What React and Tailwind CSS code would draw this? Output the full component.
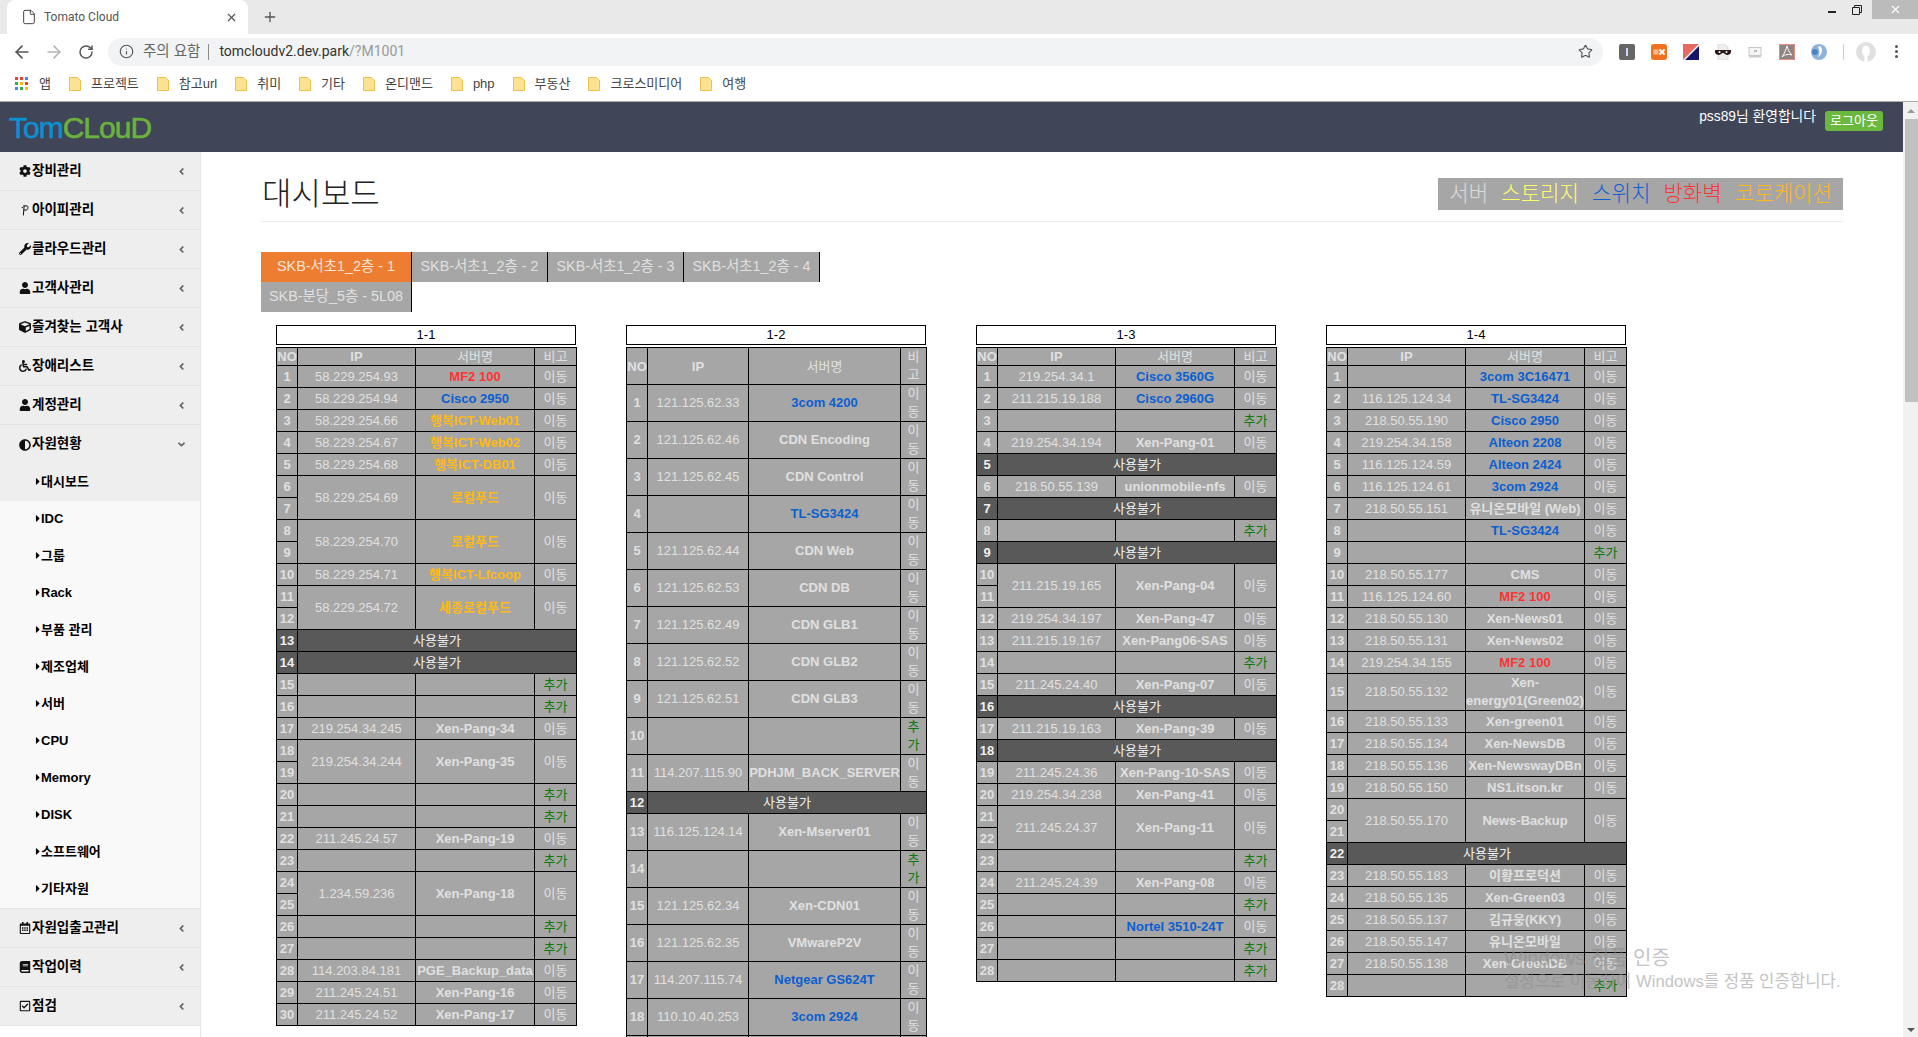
import React from 'react';
import { ArrowLeft, ArrowRight, RotateCw, Info, Star, X, Plus, File } from 'lucide-react';
import { FaCog, FaUser, FaWrench, FaCube, FaWheelchair, FaAdjust, FaRegCalendarAlt, FaBook, FaRegCheckSquare, FaAngleLeft, FaAngleDown, FaCaretRight } from 'react-icons/fa';

const FONT = 'font-["Liberation_Sans","Noto_Sans_CJK_KR",sans-serif]';
const R = 'text-[#ff3333]';
const B = 'text-[#0b5fd0]';
const O = 'text-[#ffb914]';

const n = (no, ip, name, color) => ({ no, ip, name, color });
const add = (no) => ({ no, add: true });
const off = (no) => ({ no, off: true });
const sp = (no, ip, name, color) => ({ no, ip, name, color, span: true });

function expand(rows) {
  const out = [];
  rows.forEach((r) => {
    if (r.span) {
      out.push({ ...r, rowSpan: 2 });
      out.push({ no: r.no + 1, continued: true });
    } else out.push(r);
  });
  return out;
}

const t1 = [
  n(1, '58.229.254.93', 'MF2 100', R), n(2, '58.229.254.94', 'Cisco 2950', B), n(3, '58.229.254.66', '행복ICT-Web01', O),
  n(4, '58.229.254.67', '행복ICT-Web02', O), n(5, '58.229.254.68', '행복ICT-DB01', O), sp(6, '58.229.254.69', '로컬푸드', O),
  sp(8, '58.229.254.70', '로컬푸드', O), n(10, '58.229.254.71', '행복ICT-Lfcoop', O), sp(11, '58.229.254.72', '세종로컬푸드', O),
  off(13), off(14), add(15), add(16), n(17, '219.254.34.245', 'Xen-Pang-34'), sp(18, '219.254.34.244', 'Xen-Pang-35'),
  add(20), add(21), n(22, '211.245.24.57', 'Xen-Pang-19'), add(23), sp(24, '1.234.59.236', 'Xen-Pang-18'), add(26), add(27),
  n(28, '114.203.84.181', 'PGE_Backup_data'), n(29, '211.245.24.51', 'Xen-Pang-16'), n(30, '211.245.24.52', 'Xen-Pang-17'),
];
const t2 = [
  n(1, '121.125.62.33', '3com 4200', B), n(2, '121.125.62.46', 'CDN Encoding'), n(3, '121.125.62.45', 'CDN Control'),
  n(4, '', 'TL-SG3424', B), n(5, '121.125.62.44', 'CDN Web'), n(6, '121.125.62.53', 'CDN DB'), n(7, '121.125.62.49', 'CDN GLB1'),
  n(8, '121.125.62.52', 'CDN GLB2'), n(9, '121.125.62.51', 'CDN GLB3'), add(10), n(11, '114.207.115.90', 'PDHJM_BACK_SERVER'),
  off(12), n(13, '116.125.124.14', 'Xen-Mserver01'), add(14), n(15, '121.125.62.34', 'Xen-CDN01'), n(16, '121.125.62.35', 'VMwareP2V'),
  n(17, '114.207.115.74', 'Netgear GS624T', B), n(18, '110.10.40.253', '3com 2924', B), { no: '', ip: '', name: '', blank: true },
];
const t3 = [
  n(1, '219.254.34.1', 'Cisco 3560G', B), n(2, '211.215.19.188', 'Cisco 2960G', B), add(3), n(4, '219.254.34.194', 'Xen-Pang-01'),
  off(5), n(6, '218.50.55.139', 'unionmobile-nfs'), off(7), add(8), off(9), sp(10, '211.215.19.165', 'Xen-Pang-04'),
  n(12, '219.254.34.197', 'Xen-Pang-47'), n(13, '211.215.19.167', 'Xen-Pang06-SAS'), add(14), n(15, '211.245.24.40', 'Xen-Pang-07'),
  off(16), n(17, '211.215.19.163', 'Xen-Pang-39'), off(18), n(19, '211.245.24.36', 'Xen-Pang-10-SAS'), n(20, '219.254.34.238', 'Xen-Pang-41'),
  sp(21, '211.245.24.37', 'Xen-Pang-11'), add(23), n(24, '211.245.24.39', 'Xen-Pang-08'), add(25), n(26, '', 'Nortel 3510-24T', B), add(27), add(28),
];
const t4 = [
  n(1, '', '3com 3C16471', B), n(2, '116.125.124.34', 'TL-SG3424', B), n(3, '218.50.55.190', 'Cisco 2950', B), n(4, '219.254.34.158', 'Alteon 2208', B),
  n(5, '116.125.124.59', 'Alteon 2424', B), n(6, '116.125.124.61', '3com 2924', B), n(7, '218.50.55.151', '유니온모바일 (Web)'), n(8, '', 'TL-SG3424', B),
  add(9), n(10, '218.50.55.177', 'CMS'), n(11, '116.125.124.60', 'MF2 100', R), n(12, '218.50.55.130', 'Xen-News01'), n(13, '218.50.55.131', 'Xen-News02'),
  n(14, '219.254.34.155', 'MF2 100', R), n(15, '218.50.55.132', 'Xen-energy01(Green02)'), n(16, '218.50.55.133', 'Xen-green01'), n(17, '218.50.55.134', 'Xen-NewsDB'),
  n(18, '218.50.55.136', 'Xen-NewswayDBn'), n(19, '218.50.55.150', 'NS1.itson.kr'), sp(20, '218.50.55.170', 'News-Backup'), off(22),
  n(23, '218.50.55.183', '이황프로덕션'), n(24, '218.50.55.135', 'Xen-Green03'), n(25, '218.50.55.137', '김규웅(KKY)'), n(26, '218.50.55.147', '유니온모바일'),
  n(27, '218.50.55.138', 'Xen-GreenDB'), add(28),
];

const cell = 'border border-black p-0 text-center align-middle text-[13px] leading-[18px]';
const head = 'border border-black p-0 text-center align-middle text-[13px] leading-[17px]';

function RackTable({ title, rows, narrow }) {
  const cols = narrow ? ['w-[21px]', 'w-[101px]', 'w-[152px]', 'w-[26px]'] : ['w-[21px]', 'w-[118px]', 'w-[119px]', 'w-[42px]'];
  const wrap = narrow ? 'px-[2px]' : '';
  return (
    <div className="w-[300px] shrink-0">
      <div className="h-[20px] border border-black bg-white text-center text-[13px] leading-[18px] text-black">{title}</div>
      <table className="mt-[2px] w-[300px] table-fixed border-collapse bg-[#a6a6a6] text-[#e0e0e0]">
        <colgroup>
          {cols.map((c, i) => <col key={i} className={c} />)}
        </colgroup>
        <thead>
          <tr>
            <th className={`${head} font-bold`}>NO</th>
            <th className={`${head} font-bold`}>IP</th>
            <th className={`${head} font-normal`}>서버명</th>
            <th className={`${narrow ? cell : head} font-normal ${wrap}`}>비고</th>
          </tr>
        </thead>
        <tbody>
          {expand(rows).map((r, i) => {
            if (r.continued) return <tr key={i}><td className={`${cell} h-[22px] font-bold`}>{r.no}</td></tr>;
            if (r.off) return (
              <tr key={i} className="bg-[#595959] text-[#f0f0f0]">
                <td className={`${cell} h-[22px] font-bold`}>{r.no}</td>
                <td colSpan={3} className={`${cell} h-[22px]`}>사용불가</td>
              </tr>
            );
            return (
              <tr key={i}>
                <td className={`${cell} h-[22px] font-bold`}>{r.no}</td>
                <td rowSpan={r.rowSpan} className={`${cell} h-[22px]`}>{r.ip}</td>
                <td rowSpan={r.rowSpan} className={`${cell} h-[22px] font-bold ${r.color || ''}`}>{r.name}</td>
                <td rowSpan={r.rowSpan} className={`${cell} h-[22px] ${wrap} ${r.add ? 'text-[#0a7a0a]' : ''}`}>{r.blank ? '' : r.add ? '추가' : '이동'}</td>
              </tr>
            );
          })}
        </tbody>
      </table>
    </div>
  );
}

function IpIcon() {
  return (
    <svg viewBox="0 0 12 14" className="h-[13px] w-[10px]" fill="none" stroke="currentColor" strokeWidth="1.2">
      <path d="M4 1.500h4.500c1.500 0 1.500 4.500-1 5H4.500M5 1l-1 12M2 3.500h1.500" />
    </svg>
  );
}

const menuTop = [
  [<FaCog />, '장비관리'], [<IpIcon />, '아이피관리'], [<FaWrench />, '클라우드관리'], [<FaUser />, '고객사관리'],
  [<FaCube />, '즐겨찾는 고객사'], [<FaWheelchair />, '장애리스트'], [<FaUser />, '계정관리'],
];
const menuBottom = [[<FaRegCalendarAlt />, '자원입출고관리'], [<FaBook />, '작업이력'], [<FaRegCheckSquare />, '점검']];
const subs = ['IDC', '그룹', 'Rack', '부품 관리', '제조업체', '서버', 'CPU', 'Memory', 'DISK', '소프트웨어', '기타자원'];

function MenuItem({ icon, label, open, noBorder }) {
  return (
    <div className={`flex h-[39px] items-center pl-[17px] pr-[13px] text-black ${noBorder ? '' : 'border-b border-[#e3e3e3]'}`}>
      <span className="flex w-[15px] items-center justify-center text-[12px] text-[#111]">{icon}</span>
      <span className="text-[13.5px] font-bold">{label}</span>
      <span className="ml-auto text-[11px] text-[#666]">{open ? <FaAngleDown /> : <FaAngleLeft />}</span>
    </div>
  );
}

function SubItem({ label }) {
  return (
    <div className="flex h-[37px] items-center pb-[2px] pl-[35px] text-[13px] font-bold text-black">
      <FaCaretRight className="w-[6px] text-[11px]" />
      <span>{label}</span>
    </div>
  );
}

function Sidebar() {
  return (
    <div className="w-[201px] shrink-0 border-r border-[#e7e7e7] bg-white">
      <div className="bg-[#eeeeee]">
        {menuTop.map(([ic, l]) => <MenuItem key={l} icon={ic} label={l} />)}
        <MenuItem icon={<FaAdjust />} label="자원현황" open noBorder />
        <SubItem label="대시보드" />
      </div>
      <div className="bg-[#f9f9f9]">
        {subs.map((s) => <SubItem key={s} label={s} />)}
      </div>
      <div className="border-t border-[#e3e3e3] bg-[#eeeeee]">
        {menuBottom.map(([ic, l]) => <MenuItem key={l} icon={ic} label={l} />)}
      </div>
    </div>
  );
}

const tabs = [
  ['SKB-서초1_2층 - 1', 'w-[151px] bg-[#ed7d31] text-[#f4e4d8]'],
  ['SKB-서초1_2층 - 2', 'w-[136px] bg-[#a6a6a6] text-[#e0e0e0]'],
  ['SKB-서초1_2층 - 3', 'w-[136px] bg-[#a6a6a6] text-[#e0e0e0]'],
  ['SKB-서초1_2층 - 4', 'w-[136px] bg-[#a6a6a6] text-[#e0e0e0]'],
  ['SKB-분당_5층 - 5L08', 'w-[151px] bg-[#a6a6a6] text-[#e0e0e0]'],
];

function Folder() {
  return (
    <svg viewBox="0 0 12 14" className="h-[14px] w-[12px] shrink-0">
      <path d="M.5.5h8l3 3v10H.5z" fill="#fde293" stroke="#eec14a" />
    </svg>
  );
}

function Exts() {
  return (
    <div className="ml-[16px] flex items-center gap-[16px]">
      <svg viewBox="0 0 16 16" className="h-4 w-4"><rect width="16" height="16" rx="2" fill="#666" /><rect x="7" y="4" width="1" height="8" fill="#cfd8ff" /><rect x="8" y="4" width="1" height="8" fill="#ffc8c8" /></svg>
      <svg viewBox="0 0 16 16" className="h-4 w-4"><rect width="16" height="16" rx="3" fill="#f2711c" /><rect x="2.500" y="5.500" width="5" height="5" fill="#f9b98c" /><path d="M8.500 5.500l5 5M13.500 5.500l-5 5" stroke="#fff" strokeWidth="1.800" /></svg>
      <svg viewBox="0 0 16 16" className="h-4 w-4"><rect width="16" height="16" fill="#e56b62" /><path d="M16 0v16H0z" fill="#fff" /><path d="M16 2v14H2z" fill="#16146b" /></svg>
      <svg viewBox="0 0 16 16" className="h-4 w-4"><path d="M3 0h7l3 3v13H3z" fill="#eee" stroke="#ddd" /><path d="M0 6h16v2c0 2-2 3-4 3-1 0-3-2-4-2s-3 2-4 2c-2 0-4-1-4-3z" fill="#2a1a1a" /><circle cx="4.500" cy="8" r="1" fill="#fff" /><circle cx="11.500" cy="8" r="1" fill="#fff" /></svg>
      <svg viewBox="0 0 16 16" className="h-4 w-4"><rect x="2" y="3.500" width="12" height="8" fill="#f5f5f5" stroke="#c8c8c8" /><rect x="7" y="6" width="3" height="2" fill="#bbb" /><rect x="2" y="12" width="12" height="1.500" fill="#ccc" /></svg>
      <svg viewBox="0 0 16 16" className="h-4 w-4"><rect x=".5" y=".5" width="15" height="15" fill="#8e8482" stroke="#ef8a80" /><path d="M8 2c1 3 2 7 5 9-3-1-7-1-10 2 2-3 4-7 5-11z" fill="none" stroke="#fff" strokeWidth="1" /></svg>
      <svg viewBox="0 0 16 16" className="h-4 w-4"><circle cx="8" cy="8" r="8" fill="#8fb4dc" /><path d="M9 2c3 2 3 8-2 11 2-3 2-7 0-10z" fill="#fff" /><circle cx="4" cy="8" r="3" fill="#4d83c2" /></svg>
      <div className="h-[16px] w-px bg-[#cfcfcf]" />
      <svg viewBox="0 0 20 20" className="ml-[-4px] h-5 w-5"><circle cx="10" cy="10" r="10" fill="#e0e0e0" /><ellipse cx="10" cy="9" rx="4" ry="5.500" fill="#fff" /><rect x="8.500" y="13" width="3" height="7" fill="#fff" /></svg>
    </div>
  );
}

export default function App() {
  const bookmarks = ['프로젝트', '참고url', '취미', '기타', '온디맨드', 'php', '부동산', '크로스미디어', '여행'];
  return (
    <div className={`relative flex h-[1037px] w-[1918px] flex-col overflow-hidden bg-white ${FONT}`}>
      {/* tab strip */}
      <div className="relative flex h-[34px] shrink-0 items-end bg-[#e9e9e9]">
        <div className="ml-[7px] flex h-[34px] w-[241px] items-center rounded-t-[8px] bg-white pl-[14px] pr-[10px]">
          <File size={16} strokeWidth={1.5} className="text-[#444]" />
          <span className="ml-[7px] font-['Roboto',sans-serif] text-[12px] text-[#555]">Tomato Cloud</span>
          <X size={13} strokeWidth={2.2} className="ml-auto text-[#555]" />
        </div>
        <Plus size={16} strokeWidth={2} className="mb-[9px] ml-[14px] text-[#555]" />
        <div className="absolute right-0 top-0 flex h-[19px] items-start">
          <div className="mr-[16px] mt-[11px] h-[2px] w-[8px] bg-[#222]" />
          <svg viewBox="0 0 10 10" className="mr-[10px] mt-[5px] h-[10px] w-[10px]" fill="none" stroke="#222"><path d="M.5 2.500h7v7h-7zM2.500 2.500v-2h7v7h-2" /></svg>
          <div className="flex h-[19px] w-[46px] items-center justify-center bg-[#bbbbbb]"><X size={13} strokeWidth={2} className="text-white" /></div>
        </div>
      </div>
      {/* address row */}
      <div className="flex h-[34px] shrink-0 items-center bg-white pl-[12px] pt-[1px]">
        <ArrowLeft size={20} strokeWidth={2} className="text-[#555]" />
        <ArrowRight size={20} strokeWidth={2} className="ml-[12px] text-[#b5b5b5]" />
        <RotateCw size={16} strokeWidth={2.2} className="ml-[14px] text-[#555]" />
        <div className="ml-[14px] flex h-[28px] w-[1495px] items-center rounded-[14px] bg-[#f1f3f4] pl-[11px] pr-[10px]">
          <Info size={15} strokeWidth={1.8} className="text-[#555]" />
          <span className="ml-[9px] text-[14.500px] text-[#666]">주의 요함</span>
          <span className="ml-[8px] h-[16px] w-px bg-[#888]" />
          <span className="ml-[10px] font-['Roboto',sans-serif] text-[14px] text-[#333]">tomcloudv2.dev.park<span className="text-[#999]">/?M1001</span></span>
          <Star size={15} strokeWidth={1.8} className="ml-auto text-[#555]" />
        </div>
        <Exts />
        <div className="ml-[19px] flex flex-col gap-[2px]">
          <span className="h-[3px] w-[3px] rounded-full bg-[#555]" />
          <span className="h-[3px] w-[3px] rounded-full bg-[#555]" />
          <span className="h-[3px] w-[3px] rounded-full bg-[#555]" />
        </div>
      </div>
      {/* bookmarks */}
      <div className="flex h-[34px] shrink-0 items-center border-b border-[#aaaaaa] bg-white pb-[2px] pl-[15px] text-[13px] text-[#444]">
        <div className="grid h-[13px] w-[13px] grid-cols-3 grid-rows-3 gap-[2px]">
          <i className="bg-[#ea4335]" /><i className="bg-[#ea4335]" /><i className="bg-[#4285f4]" />
          <i className="bg-[#34a853]" /><i className="bg-[#fbbc05]" /><i className="bg-[#ea4335]" />
          <i className="bg-[#4285f4]" /><i className="bg-[#34a853]" /><i className="bg-[#fbbc05]" />
        </div>
        <span className="ml-[11px] mr-[18px]">앱</span>
        <div className="flex items-center gap-[18px]">
          {bookmarks.map((b) => (
            <div key={b} className="flex items-center gap-[10px]"><Folder /><span>{b}</span></div>
          ))}
        </div>
      </div>
      {/* page */}
      <div className="flex min-h-0 flex-1">
        <div className="flex min-w-0 flex-1 flex-col">
          <div className="flex h-[50px] shrink-0 items-start justify-between bg-[#404558] pr-[20px]">
            <div className="ml-[9px] mt-[8px] text-[30px] leading-[36px] tracking-[-1px] [-webkit-text-stroke:0.6px_currentColor]"><span className="text-[#0d8fd4]">Tom</span><span className="text-[#6ab23c]">CLouD</span></div>
            <div className="mt-[5px] flex items-center text-[13.800px] text-white">
              <span className="mb-[7px]">pss89님 환영합니다</span>
              <span className="ml-[9px] flex h-[20px] w-[58px] items-center justify-center rounded-[3px] bg-[#6bb83f] text-[13px]">로그아웃</span>
            </div>
          </div>
          <div className="flex min-h-0 flex-1">
            <Sidebar />
            <div className="min-w-0 flex-1 overflow-hidden pl-[60px] pr-[60px] pt-[26px]">
              <div className="box-content flex h-[43px] items-start justify-between border-b border-[#eeeeee]">
                <h1 className="ml-[1px] mt-[-2px] text-[32px] font-light leading-[36px] text-[#222]">대시보드</h1>
                <div className="flex h-[32px] items-center gap-[13px] bg-[#a6a6a6] pl-[11px] pr-[11px] text-[21.150px] font-light">
                  <span className="text-[#dcdcdc]">서버</span>
                  <span className="text-[#ffff66]">스토리지</span>
                  <span className="text-[#0b5fd0]">스위치</span>
                  <span className="text-[#ff3333]">방화벽</span>
                  <span className="text-[#ffb914]">코로케이션</span>
                </div>
              </div>
              <div className="mt-[30px] flex w-[570px] flex-wrap">
                {tabs.map(([t, c]) => (
                  <div key={t} className={`flex h-[30px] items-center justify-center border-r border-black text-[14.400px] ${c}`}>{t}</div>
                ))}
              </div>
              <div className="ml-[15px] mt-[13px] flex gap-[50px]">
                <RackTable title="1-1" rows={t1} />
                <RackTable title="1-2" rows={t2} narrow />
                <RackTable title="1-3" rows={t3} />
                <RackTable title="1-4" rows={t4} />
              </div>
            </div>
          </div>
        </div>
        {/* scrollbar */}
        <div className="flex w-[15px] shrink-0 flex-col bg-[#f1f1f1]">
          <div className="flex h-[17px] items-center justify-center"><div className="h-0 w-0 border-x-[4px] border-b-[4px] border-x-transparent border-b-[#999]" /></div>
          <div className="ml-[2px] h-[283px] bg-[#c1c1c1]" />
          <div className="flex-1" />
          <div className="flex h-[15px] items-center justify-center"><div className="h-0 w-0 border-x-[4px] border-t-[4px] border-x-transparent border-t-[#555]" /></div>
        </div>
      </div>
      {/* Windows activation watermark */}
      <div className="pointer-events-none absolute left-[1504px] top-[944px] whitespace-nowrap text-[#8a8a8a] opacity-50">
        <div className="text-[20px] leading-[28px]">Windows 정품 인증</div>
        <div className="text-[16.700px] leading-[19px]">설정으로 이동하여 Windows를 정품 인증합니다.</div>
      </div>
    </div>
  );
}
